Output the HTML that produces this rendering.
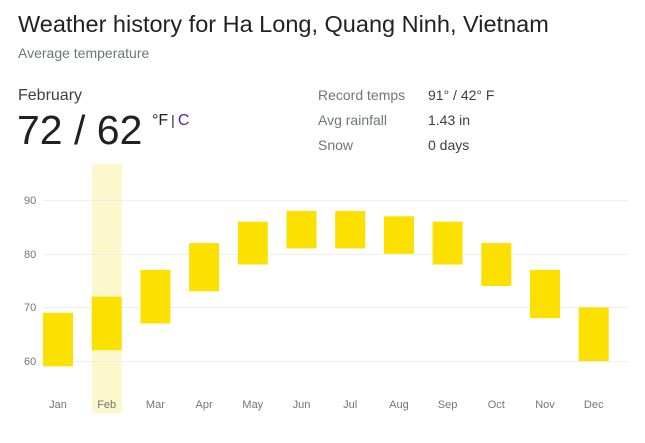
<!DOCTYPE html>
<html><head><meta charset="utf-8"><style>
body{margin:0;width:645px;height:443px;background:#fff;font-family:"Liberation Sans",Arial,sans-serif;position:relative;overflow:hidden}
.a{position:absolute;white-space:nowrap}
</style></head><body>
<div class="a" style="left:18px;top:11px;font-size:23.5px;color:#222">Weather history for Ha Long, Quang Ninh, Vietnam</div>
<div class="a" style="left:18px;top:45px;font-size:14px;color:#70757a">Average temperature</div>
<div class="a" style="left:18px;top:87px;font-size:16px;color:#3c4043">February</div>
<div class="a" style="left:17px;top:107px;font-size:41px;color:#202124">72 / 62</div>
<div class="a" style="left:152px;top:112px;font-size:16px;color:#202124">°F<span style="margin:0 3px;color:#202124;font-size:14px">|</span><span style="color:#4a1fc4">C</span></div>
<div class="a" style="left:318px;top:83px;font-size:14px;color:#70757a;line-height:25px">Record temps<br>Avg rainfall<br>Snow</div>
<div class="a" style="left:428px;top:83px;font-size:14px;color:#3c4043;line-height:25px">91° / 42° F<br>1.43 in<br>0 days</div>
<svg class="a" style="left:0;top:0" width="645" height="443">
<rect x="92" y="164" width="30" height="249" fill="#fdf7cc"/>
<g stroke="#eeeeee" stroke-width="1">
<line x1="43" x2="628" y1="200.5" y2="200.5"/><line x1="43" x2="628" y1="254.5" y2="254.5"/>
<line x1="43" x2="628" y1="307.5" y2="307.5"/><line x1="43" x2="628" y1="361.5" y2="361.5"/></g>
<g font-size="11" fill="#70757a" font-family="Liberation Sans,Arial,sans-serif">
<text x="24" y="204">90</text><text x="24" y="258">80</text><text x="24" y="311">70</text><text x="24" y="365">60</text></g>
<g fill="#fbe000" id="b"></g>
<g font-size="11" fill="#70757a" text-anchor="middle" font-family="Liberation Sans,Arial,sans-serif" id="m"></g>
</svg>
<script>
var d=[[59,69],[62,72],[67,77],[73,82],[78,86],[81,88],[81,88],[80,87],[78,86],[74,82],[68,77],[60,70]];
var n=["Jan","Feb","Mar","Apr","May","Jun","Jul","Aug","Sep","Oct","Nov","Dec"];
var b=document.getElementById("b"),m=document.getElementById("m"),s="",t="";
function y(v){return 361-(v-60)*5.36}
for(var i=0;i<12;i++){var c=58+i*48.7;
s+='<rect x="'+(c-15)+'" y="'+y(d[i][1])+'" width="30" height="'+(y(d[i][0])-y(d[i][1]))+'"/>';
t+='<text x="'+c+'" y="408">'+n[i]+'</text>';}
b.innerHTML=s;m.innerHTML=t;
</script>
</body></html>
